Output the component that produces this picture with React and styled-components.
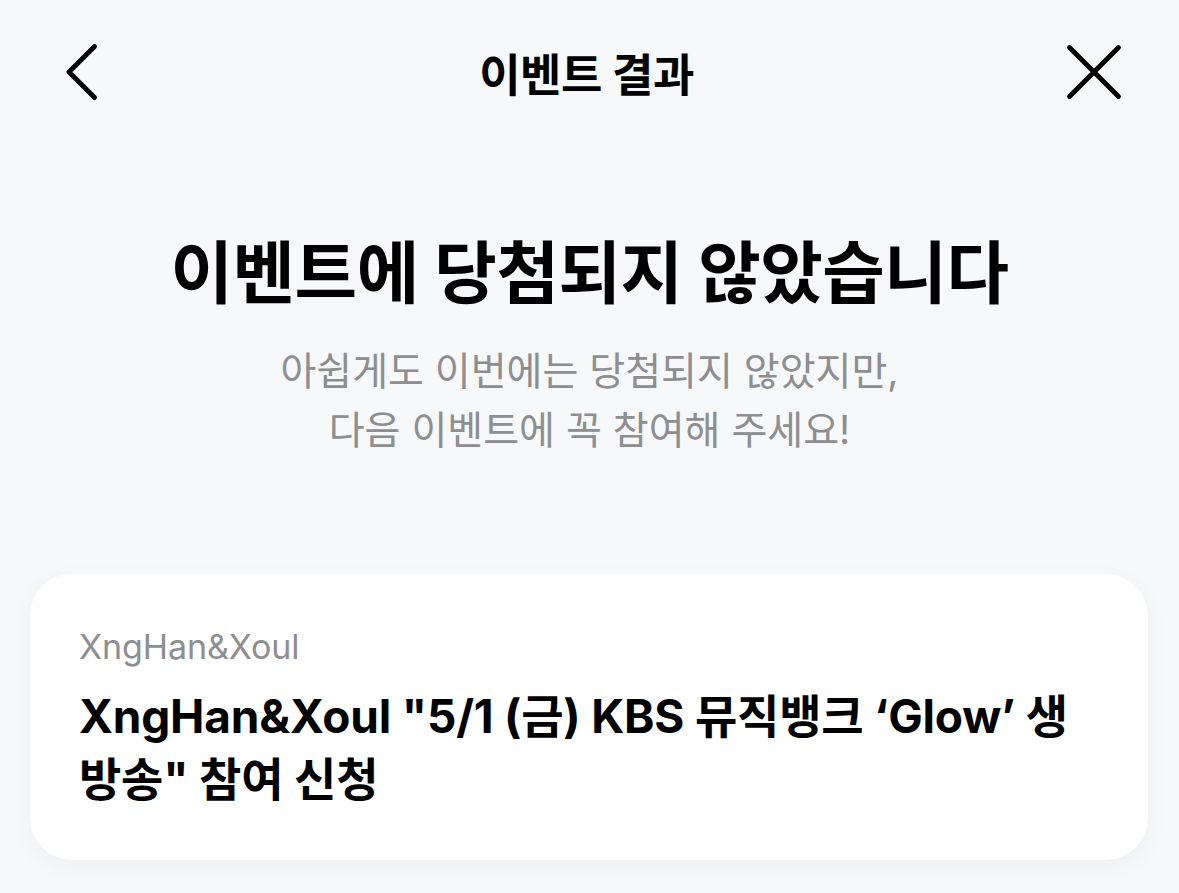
import React from 'react';
import styled, { createGlobalStyle } from 'styled-components';

const GlobalStyle = createGlobalStyle`
  html, body {
    margin: 0;
    padding: 0;
    background: #f7f8fa;
  }
  body {
    font-family: Inter, "Noto Sans CJK KR", sans-serif;
    color: #000;
  }
`;

const Page = styled.div`
  width: 1179px;
  height: 893px;
  overflow: hidden;
  background: #f7f8fa;
  display: flex;
  flex-direction: column;
`;

const Header = styled.header`
  height: 144px;
  display: grid;
  grid-template-columns: 164px 1fr 170px;
  align-items: center;
`;

const IconButton = styled.button`
  height: 144px;
  border: none;
  background: none;
  padding: 0;
  display: flex;
  align-items: center;
  justify-content: center;
  cursor: pointer;
`;

const HeaderTitle = styled.h1`
  margin: 0;
  text-align: center;
  font-size: 45px;
  font-weight: 700;
  letter-spacing: -0.5px;
`;

const Result = styled.section`
  display: flex;
  flex-direction: column;
  align-items: center;
  padding-top: 89px;
`;

const Headline = styled.h2`
  margin: 0;
  font-size: 68px;
  font-weight: 700;
  letter-spacing: -0.5px;
  line-height: 80px;
`;

const Message = styled.p`
  margin: 28px 0 0;
  text-align: center;
  font-size: 39px;
  line-height: 59px;
  color: #8e8e90;
`;

const Card = styled.article`
  margin: 115px 31px 0 30px;
  background: #fff;
  border-radius: 42px;
  box-shadow: 0 6px 24px rgba(0, 0, 0, 0.04);
  padding: 53px 40px 49px 49px;
`;

const Artist = styled.div`
  font-size: 34px;
  line-height: 40px;
  color: #8e8e90;
  letter-spacing: -0.1px;
`;

const EventTitle = styled.div`
  margin-top: 18px;
  font-size: 46px;
  font-weight: 700;
  line-height: 63px;
  letter-spacing: -0.2px;
`;

const Chevron = () => (
  <svg width="32" height="58" viewBox="0 0 32 58" fill="none">
    <path d="M28.5 3.5 L3 29 L28.5 54.5" stroke="#000" strokeWidth="4.8" strokeLinecap="round" strokeLinejoin="round" />
  </svg>
);

const Close = () => (
  <svg width="56" height="56" viewBox="0 0 56 56" fill="none">
    <path d="M3.5 3.5 L52.5 52.5 M52.5 3.5 L3.5 52.5" stroke="#000" strokeWidth="4.8" strokeLinecap="round" />
  </svg>
);

export default function App() {
  return (
    <Page>
      <GlobalStyle />
      <Header>
        <IconButton aria-label="뒤로">
          <Chevron />
        </IconButton>
        <HeaderTitle>이벤트 결과</HeaderTitle>
        <IconButton aria-label="닫기">
          <Close />
        </IconButton>
      </Header>
      <Result>
        <Headline>이벤트에 당첨되지 않았습니다</Headline>
        <Message>
          아쉽게도 이번에는 당첨되지 않았지만,
          <br />
          다음 이벤트에 꼭 참여해 주세요!
        </Message>
      </Result>
      <Card>
        <Artist>XngHan&amp;Xoul</Artist>
        <EventTitle>
          XngHan&amp;Xoul "5/1 (금) KBS 뮤직뱅크 ‘Glow’ 생
          <br />
          방송" 참여 신청
        </EventTitle>
      </Card>
    </Page>
  );
}
